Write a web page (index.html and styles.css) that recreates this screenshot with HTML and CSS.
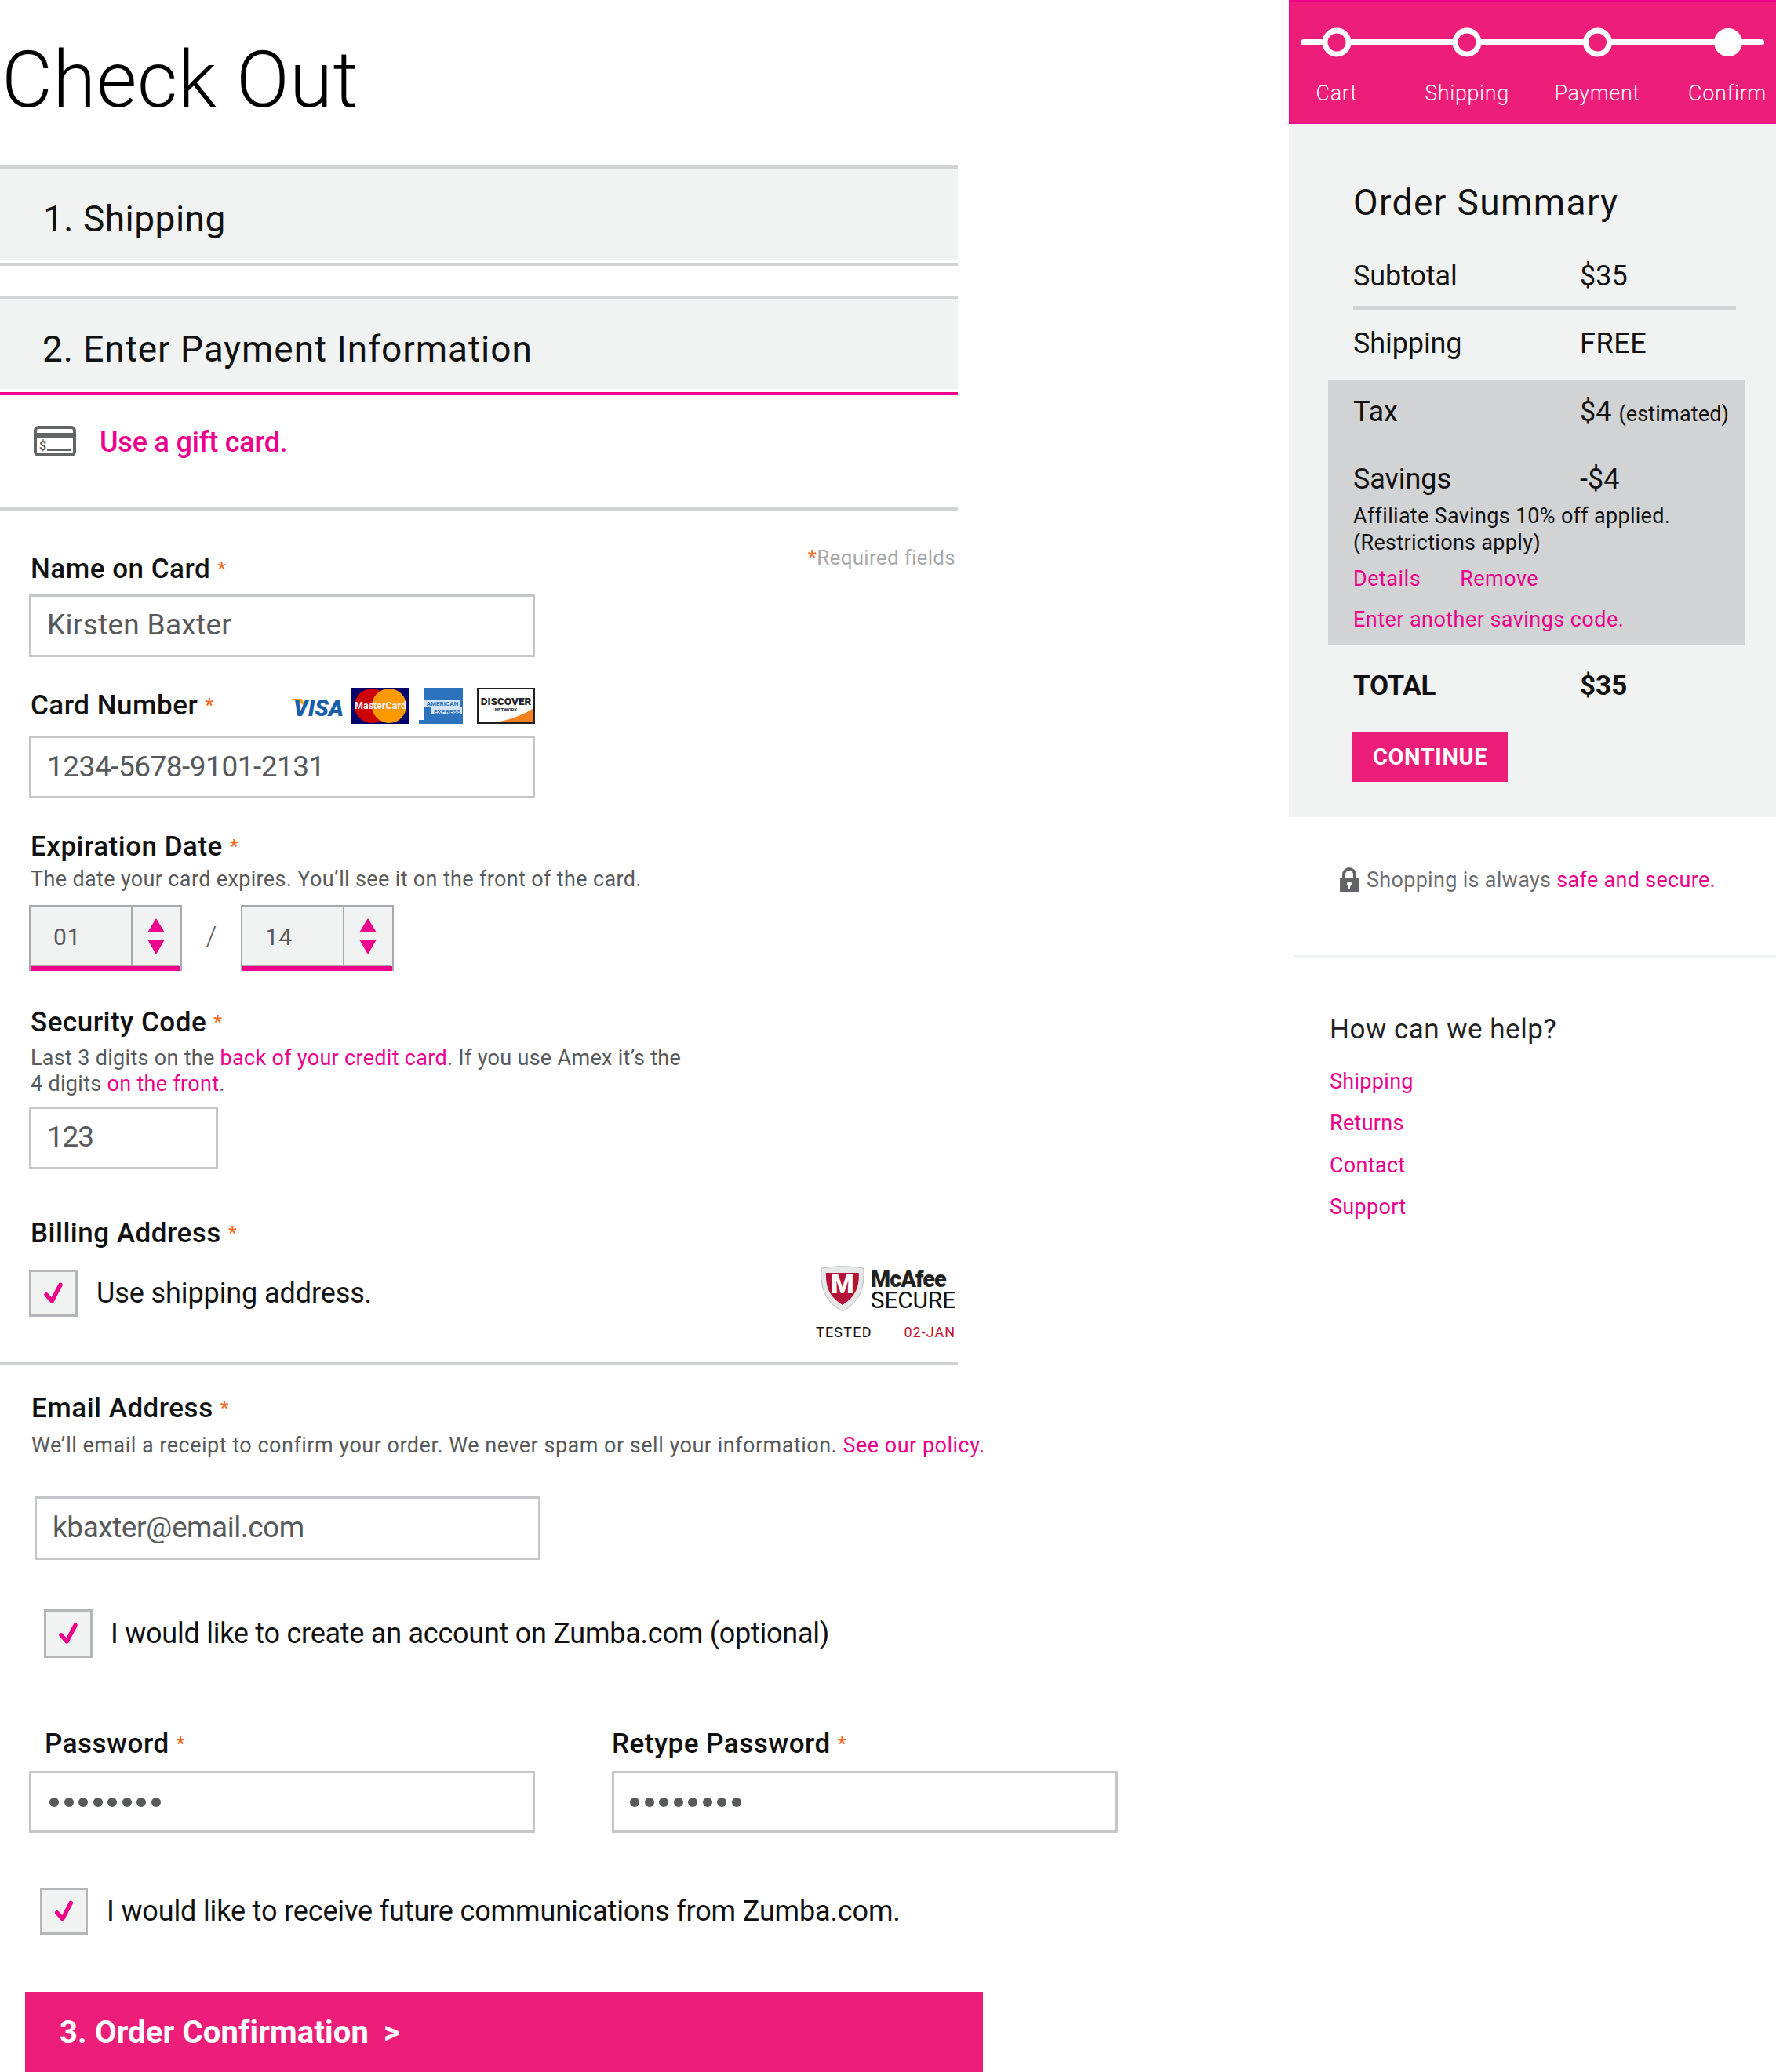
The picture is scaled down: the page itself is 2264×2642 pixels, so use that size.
FILE: index.html
```html
<!DOCTYPE html>
<html lang="en">
<head>
<meta charset="utf-8">
<title>Check Out</title>
<link rel="stylesheet" href="styles.css">
</head>
<body>
<div class="page">
<main class="main">
  <h1 class="title">Check Out</h1>
  <section class="bar">1. Shipping</section>
  <div class="rule bar-rule"></div>
  <section class="bar bar-two">2. Enter Payment Information</section>
  <div class="rule rule-pink"></div>
  <div class="gift">
    <svg class="gift-icon" viewBox="0 0 54 39" width="54" height="39">
      <rect x="2" y="2" width="50" height="35" rx="4" class="ic-outline"/>
      <rect x="3" y="9" width="48" height="7" class="ic-fill"/>
      <text x="7" y="31" class="ic-dollar">$</text>
      <rect x="17" y="29" width="30" height="3" class="ic-fill"/>
    </svg>
    <a class="gift-link">Use a gift card.</a>
  </div>
  <div class="rule"></div>

  <div class="name-row">
    <label class="label name-label">Name on Card <span class="req">*</span></label>
    <span class="required"><span class="req-plain">*</span>Required fields</span>
  </div>
  <div class="input input-first">Kirsten Baxter</div>

  <div class="card-row">
    <label class="label">Card Number <span class="req">*</span></label>
    <div class="cards">
      <svg class="card-visa" width="70" height="40" viewBox="0 0 70 40">
        <path d="M0 9h15l5 12C16 15 8 11 0 9z" class="visa-gold"/>
        <text x="36" y="31" class="visa-text">VISA</text>
      </svg>
      <svg class="card-mc" width="74" height="46" viewBox="0 0 74 46">
        <rect width="74" height="46" class="mc-bg"/>
        <circle cx="26" cy="23" r="22" class="mc-red"/>
        <circle cx="48" cy="23" r="22" class="mc-orange"/>
        <text x="37" y="27" class="mc-text">MasterCard</text>
      </svg>
      <svg class="card-amex" width="56" height="46" viewBox="0 0 56 46">
        <rect x="6" width="50" height="46" class="amex-bg"/>
        <rect y="41" width="6" height="5" class="amex-bg"/>
        <rect x="7" y="15" width="46" height="9" class="amex-band"/>
        <rect x="16" y="25" width="39" height="9" class="amex-band"/>
        <text x="30" y="23" class="amex-text">AMERICAN</text>
        <text x="36" y="33" class="amex-text">EXPRESS</text>
      </svg>
      <svg class="card-disc" width="74" height="46" viewBox="0 0 74 46">
        <rect x="1" y="1" width="72" height="44" class="disc-bg"/>
        <path d="M24 44C45 40 60 34 72 26V44z" class="disc-orange"/>
        <text x="37" y="22" class="disc-text">DISCOVER</text>
        <text x="37" y="30" class="disc-sub">NETWORK</text>
      </svg>
    </div>
  </div>
  <div class="input input-num">1234-5678-9101-2131</div>

  <label class="label label-exp">Expiration Date <span class="req">*</span></label>
  <p class="help help-exp">The date your card expires. You’ll see it on the front of the card.</p>
  <div class="exp-row">
    <div class="select">
      <span class="select-value">01</span>
      <span class="select-arrows"><i class="arrow-up"></i><i class="arrow-down"></i></span>
    </div>
    <span class="slash">/</span>
    <div class="select">
      <span class="select-value">14</span>
      <span class="select-arrows"><i class="arrow-up"></i><i class="arrow-down"></i></span>
    </div>
  </div>

  <label class="label label-sec">Security Code <span class="req">*</span></label>
  <p class="help help-sec">Last 3 digits on the <a class="link">back of your credit card</a>. If you use Amex it’s the<br>4 digits <a class="link">on the front</a>.</p>
  <div class="input input-sec">123</div>

  <label class="label label-bill">Billing Address <span class="req">*</span></label>
  <div class="bill-row">
    <div class="check-row">
      <span class="check"><svg viewBox="0 0 62 60" width="100%" height="100%"><polyline points="21,32 29,41 41,18" class="tick"/></svg></span>
      <span class="check-text check-text-bill">Use shipping address.</span>
    </div>
    <div class="mcafee">
      <div class="mc-top">
        <svg width="58" height="60" viewBox="0 0 58 60">
          <path d="M2 4C20 1 38 1 56 4C58 30 50 48 29 59C8 48 0 30 2 4z" class="sh-out"/>
          <path d="M8 10H50C51 30 44 42 29 51C14 42 7 30 8 10z" class="sh-in"/>
          <text x="29" y="36" class="sh-m">M</text>
        </svg>
        <div class="mc-brand"><b class="mc-name">McAfee</b><span class="mc-secure">SECURE</span></div>
      </div>
      <div class="mc-bottom"><span>TESTED</span><span class="mc-date">02-JAN</span></div>
    </div>
  </div>
  <div class="rule"></div>

  <label class="label label-email">Email Address <span class="req">*</span></label>
  <p class="help help-email">We’ll email a receipt to confirm your order. We never spam or sell your information. <a class="link">See our policy.</a></p>
  <div class="input input-email">kbaxter@email.com</div>

  <div class="check-row check-row-acct">
    <span class="check"><svg viewBox="0 0 62 60" width="100%" height="100%"><polyline points="21,32 29,41 41,18" class="tick"/></svg></span>
    <span class="check-text check-text-acct">I would like to create an account on Zumba.com (optional)</span>
  </div>

  <div class="pw-row">
    <div class="pw-col">
      <label class="label label-pw">Password <span class="req">*</span></label>
      <div class="input input-pw"><span class="dots"><i></i><i></i><i></i><i></i><i></i><i></i><i></i><i></i></span></div>
    </div>
    <div class="pw-col">
      <label class="label label-pw2">Retype Password <span class="req">*</span></label>
      <div class="input input-pw input-pw2"><span class="dots"><i></i><i></i><i></i><i></i><i></i><i></i><i></i><i></i></span></div>
    </div>
  </div>

  <div class="check-row check-row-comm">
    <span class="check"><svg viewBox="0 0 62 60" width="100%" height="100%"><polyline points="21,32 29,41 41,18" class="tick"/></svg></span>
    <span class="check-text check-text-comm">I would like to receive future communications from Zumba.com.</span>
  </div>

  <div class="next-bar"><span>3. Order Confirmation</span><span class="next-arrow">&gt;</span></div>
</main>

<aside class="side">
  <div class="steps">
    <svg class="steps-line" width="621" height="90" viewBox="0 0 621 90">
      <rect x="15" y="50" width="591" height="8" rx="4" class="st-line"/>
      <circle cx="61" cy="54" r="15" class="st-open"/>
      <circle cx="227" cy="54" r="15" class="st-open"/>
      <circle cx="393.500" cy="54" r="15" class="st-open"/>
      <circle cx="560" cy="54" r="18" class="st-full"/>
    </svg>
    <div class="step-labels">
      <span class="step">Cart</span>
      <span class="step">Shipping</span>
      <span class="step">Payment</span>
      <span class="step">Confirm</span>
    </div>
  </div>
  <div class="summary">
    <h2 class="sum-title">Order Summary</h2>
    <div class="row row-sub"><span class="row-k">Subtotal</span><span>$35</span></div>
    <div class="sum-rule"></div>
    <div class="row row-ship"><span class="row-k">Shipping</span><span class="row-free">FREE</span></div>
    <div class="sum-box">
      <div class="row"><span class="row-k">Tax</span><span>$4 <small class="est">(estimated)</small></span></div>
      <div class="row row-sav"><span class="row-k">Savings</span><span>-$4</span></div>
      <p class="aff">Affiliate Savings 10% off applied.<br>(Restrictions apply)</p>
      <div class="aff-links"><a class="link">Details</a><a class="link aff-remove">Remove</a></div>
      <a class="link aff-more">Enter another savings code.</a>
    </div>
    <div class="row row-total"><span class="row-k">TOTAL</span><span>$35</span></div>
    <div class="btn">CONTINUE</div>
  </div>
  <div class="secure">
    <svg width="24" height="32" viewBox="0 0 24 32">
      <path d="M5 14V9a7 7 0 0 1 14 0v5" class="lock-arc"/>
      <rect y="13" width="24" height="19" rx="2" class="lock-body"/>
      <circle cx="12" cy="21" r="3" class="lock-hole"/>
      <rect x="11" y="21" width="2" height="6" class="lock-hole"/>
    </svg>
    <span class="secure-text">Shopping is always <a class="link">safe and secure.</a></span>
  </div>
  <div class="side-rule"></div>
  <h3 class="help-title">How can we help?</h3>
  <nav class="help-links">
    <a class="link">Shipping</a>
    <a class="link">Returns</a>
    <a class="link">Contact</a>
    <a class="link">Support</a>
  </nav>
</aside>
</div>
</body>
</html>
```

FILE: styles.css
```css
* { box-sizing: border-box; }
html, body { margin: 0; padding: 0; background: #fff; }
body { font-family: Roboto, "Noto Sans", sans-serif; color: #111; }
p, h1, h2, h3 { margin: 0; font-weight: 400; }
.page { display: grid; grid-template-columns: 1643px 621px; width: 2264px; height: 2642px; overflow: hidden; }
.main { min-width: 0; }
.link { color: #ec008c; }

.title { height: 211px; line-height: 204px; font-size: 100px; font-weight: 300; letter-spacing: .4px; color: #000; padding-left: 2px; }
.bar, .rule { width: 1221px; }
.bar { border-top: 4px solid #d1d3d4; height: 120px; background: #f1f3f2; padding-left: 55px; font-size: 46px; font-weight: 400; line-height: 128px; letter-spacing: .5px; color: #111; }
.bar-two { margin-top: 38px; height: 119px; padding-left: 54px; letter-spacing: .95px; }
.rule { height: 4px; background: #d1d3d4; margin-top: 4px; }
.rule-pink { background: #ec008c; }
.gift { height: 143px; display: flex; align-items: flex-start; }
.gift-icon { margin: 39px 0 0 43px; }
.gift-link { margin: 38px 0 0 30px; font-size: 36px; line-height: 44px; color: #ec008c; font-weight: 500; letter-spacing: -.2px; }
.ic-outline { fill: none; stroke: #636466; stroke-width: 4; }
.ic-fill { fill: #636466; }
.ic-dollar { fill: #636466; font-size: 16px; font-weight: 700; }
.gift + .rule { margin-top: 0; }

.label { display: block; height: 40px; padding-top: 1px; font-size: 35px; line-height: 40px; font-weight: 500; letter-spacing: .5px; color: #111; padding-left: 2px; }
.req { color: #f26a21; font-size: 24px; vertical-align: 4px; }
.name-row { display: flex; justify-content: space-between; width: 1184px; margin: 40px 0 0 37px; }
.name-label { margin-top: 13px; }
.required { font-size: 26px; line-height: 40px; color: #a7a9ac; padding-right: 3px; letter-spacing: .3px; }
.req-plain { color: #f26a21; }
.input { width: 645px; height: 80px; margin-left: 37px; border: 3px solid #c4c6c8; background: #fff; padding-left: 20px; font-size: 37px; line-height: 71px; color: #58595b; letter-spacing: .3px; }
.input-first { margin-top: 14px; }
.input-num { letter-spacing: -.5px; line-height: 74px; }
.card-row { display: flex; justify-content: space-between; width: 645px; height: 61px; margin: 39px 0 0 37px; }
.card-row .label { line-height: 42px; }
.cards { display: flex; align-items: flex-start; }
.card-visa { margin-top: 5px; }
.card-mc { margin-left: 8px; }
.card-amex { margin-left: 12px; }
.card-disc { margin-left: 18px; }
.visa-gold { fill: #f7a823; }
.visa-text { fill: #1a5ea8; font-size: 29px; font-weight: 900; font-style: italic; text-anchor: middle; }
.mc-bg { fill: #03036b; }
.mc-red { fill: #cc0000; }
.mc-orange { fill: #ff9900; }
.mc-text { fill: #eef; font-size: 12.500px; font-weight: 700; text-anchor: middle; }
.amex-bg { fill: #2d72bc; }
.amex-band { fill: #d4e4f5; }
.amex-text { fill: #2d72bc; font-size: 8px; font-weight: 700; text-anchor: middle; }
.disc-bg { fill: #fff; stroke: #231f20; stroke-width: 2; }
.disc-orange { fill: #f48120; }
.disc-text { fill: #222; font-size: 13.500px; font-weight: 900; text-anchor: middle; }
.disc-sub { fill: #222; font-size: 6px; font-weight: 700; text-anchor: middle; }

.label-exp { margin: 40px 0 0 37px; }
.help { font-size: 27px; line-height: 33px; color: #58595b; margin-left: 39px; letter-spacing: .35px; white-space: nowrap; }
.help-exp { margin-top: 7px; }
.exp-row { display: flex; align-items: flex-start; margin: 16px 0 0 37px; }
.select { width: 195px; height: 84px; display: flex; border: solid #a7a9ac; border-width: 2px; border-bottom: 0; background: #f1f3f2; box-shadow: inset 0 -6px 0 #ec008c; position: relative; }
.select-value { width: 128px; height: 76px; border-bottom: 2px solid #a7a9ac; padding-left: 29px; font-size: 30px; line-height: 78px; font-weight: 400; color: #58595b; letter-spacing: .6px; }
.select-arrows { width: 61px; height: 76px; border-left: 2px solid #a7a9ac; border-bottom: 2px solid #a7a9ac; display: flex; flex-direction: column; align-items: center; padding-top: 15px; gap: 9px; }
.arrow-up, .arrow-down { display: block; width: 0; height: 0; border-left: 11px solid transparent; border-right: 11px solid transparent; }
.arrow-up { border-bottom: 18px solid #ec008c; }
.arrow-down { border-top: 19px solid #ec008c; }
.slash { width: 75px; text-align: center; font-size: 34px; line-height: 78px; font-weight: 300; color: #58595b; }

.label-sec { margin: 44px 0 0 37px; }
.help-sec { margin-top: 11px; letter-spacing: .3px; }
.input-sec { width: 241px; margin-top: 12px; letter-spacing: -1.2px; }
.label-bill { margin: 60px 0 0 37px; }
.bill-row { display: flex; justify-content: space-between; width: 1184px; height: 114px; margin: 28px 0 0 37px; }
.check-row { display: flex; align-items: center; height: 60px; }
.check { display: block; flex: none; width: 62px; height: 60px; border: 3px solid #b3b5b8; background: #f1f3f2; }
.tick { fill: none; stroke: #ec008c; stroke-width: 6; stroke-linecap: round; stroke-linejoin: round; }
.check-text { font-size: 36px; line-height: 62px; letter-spacing: -.1px; color: #111; font-weight: 400; white-space: nowrap; }
.check-text-bill { margin-left: 24px; }
.mcafee { width: 178px; margin-top: -6px; margin-right: 3px; }
.mc-top { display: flex; padding-left: 5px; }
.mc-brand { display: flex; flex-direction: column; margin-left: 7px; padding-top: 4px; }
.mc-name { font-size: 29px; line-height: 28px; font-weight: 900; letter-spacing: -1px; color: #222; }
.mc-secure { font-size: 30px; line-height: 26px; font-weight: 400; letter-spacing: -.2px; color: #111; }
.mc-bottom { display: flex; justify-content: space-between; margin-top: 16px; font-size: 18px; line-height: 20px; letter-spacing: 1.2px; color: #111; }
.mc-date { color: #c8102e; letter-spacing: 1px; }
.sh-out { fill: #e6e7e8; stroke: #b5b7ba; stroke-width: 1; }
.sh-in { fill: #b5123a; }
.sh-m { fill: #fff; font-size: 34px; font-weight: 900; text-anchor: middle; }

.label-email { margin: 33px 0 0 38px; }
.help-email { margin: 13px 0 0 40px; letter-spacing: .5px; }
.input-email { margin: 48px 0 0 44px; height: 81px; line-height: 74px; letter-spacing: -.45px; }
.check-row-acct { margin: 63px 0 0 56px; height: 62px; }
.check-row-acct .check { height: 62px; }
.check-text-acct { margin-left: 23px; letter-spacing: -.25px; }
.pw-row { display: flex; margin-top: 88px; }
.pw-col { width: 743px; }
.label-pw { padding-left: 57px; }
.label-pw2 { padding-left: 37px; }
.input-pw { margin-top: 16px; height: 79px; display: flex; align-items: center; padding-left: 23px; }
.input-pw2 { padding-left: 20px; }
.dots { display: flex; gap: 6.500px; }
.dots i { display: block; width: 12px; height: 12px; border-radius: 50%; background: #58595b; }
.check-row-comm { margin: 70px 0 0 51px; }
.check-row-comm .check { width: 61px; height: 60px; }
.check-text-comm { margin-left: 24px; letter-spacing: -.15px; }
.next-bar { width: 1221px; height: 103px; margin: 73px 0 0 32px; background: #ed1e79; color: #fff; display: flex; align-items: center; padding-left: 44px; font-size: 40px; font-weight: 700; letter-spacing: .15px; }
.next-arrow { margin-left: 19px; }

.side { min-width: 0; }
.steps { height: 158px; background: #ed1e79; border: solid #ec008c; border-width: 2px 0 1px 1px; overflow: hidden; }
.steps-line { display: block; margin: -2px 0 0 -1px; }
.st-line { fill: #fff; }
.st-open { fill: #ed1e79; stroke: #fff; stroke-width: 7; }
.st-full { fill: #fff; }
.step-labels { display: flex; padding-left: 60px; gap: 166px; margin-top: 11px; }
.step { width: 0; display: flex; justify-content: center; white-space: nowrap; font-size: 27px; line-height: 36px; font-weight: 300; color: #fff; letter-spacing: .6px; }

.summary { height: 884px; background: #f1f3f2; padding-top: 70px; overflow: hidden; }
.sum-title { margin-left: 82px; font-size: 46px; line-height: 60px; font-weight: 400; letter-spacing: 1.4px; color: #111; }
.row { display: flex; height: 50px; padding-top: 2px; font-size: 36px; line-height: 50px; font-weight: 400; margin-left: 82px; color: #111; white-space: nowrap; }
.row-k { width: 289px; flex: none; letter-spacing: -.1px; }
.row-free { letter-spacing: .6px; }
.row-sub { margin-top: 37px; }
.sum-rule { width: 488px; height: 5px; margin: 15px 0 0 82px; background: #d1d3d4; }
.row-ship { margin-top: 16px; }
.sum-box { width: 531px; height: 338px; margin: 24px 0 0 50px; padding: 13px 0 0 32px; background: #d1d3d4; }
.sum-box .row { margin-left: 0; }
.est { font-size: 27px; letter-spacing: .15px; }
.row-sav { margin-top: 36px; }
.aff { font-size: 27px; line-height: 34px; font-weight: 400; color: #111; margin-top: 7px; letter-spacing: .3px; }
.aff-links { display: flex; margin-top: 12px; font-size: 27px; line-height: 34px; letter-spacing: .5px; }
.aff-remove { margin-left: 50px; }
.aff-more { display: block; margin-top: 18px; font-size: 27px; line-height: 34px; letter-spacing: .45px; }
.row-total { margin-top: 25px; font-weight: 700; font-size: 35px; }
.row-total .row-k { letter-spacing: -.3px; }
.btn { width: 198px; height: 63px; margin: 36px 0 0 81px; background: #ed1e79; color: #fff; font-size: 29px; font-weight: 700; line-height: 63px; text-align: center; letter-spacing: .6px; }

.secure { display: flex; align-items: center; height: 32px; margin: 64px 0 0 65px; }
.secure-text { margin-left: 10px; font-size: 27px; line-height: 32px; color: #6d6e71; letter-spacing: .3px; white-space: nowrap; }
.lock-arc { fill: none; stroke: #636466; stroke-width: 4; }
.lock-body { fill: #636466; }
.lock-hole { fill: #fff; }
.side-rule { height: 4px; margin: 80px 0 0 5px; background: #f1f3f2; }
.help-title { margin: 69px 0 0 52px; font-size: 35px; line-height: 44px; font-weight: 400; letter-spacing: .5px; color: #222; }
.help-links { display: flex; flex-direction: column; margin: 27px 0 0 52px; gap: 19.400px; font-size: 27px; line-height: 34px; letter-spacing: .3px; }
```
